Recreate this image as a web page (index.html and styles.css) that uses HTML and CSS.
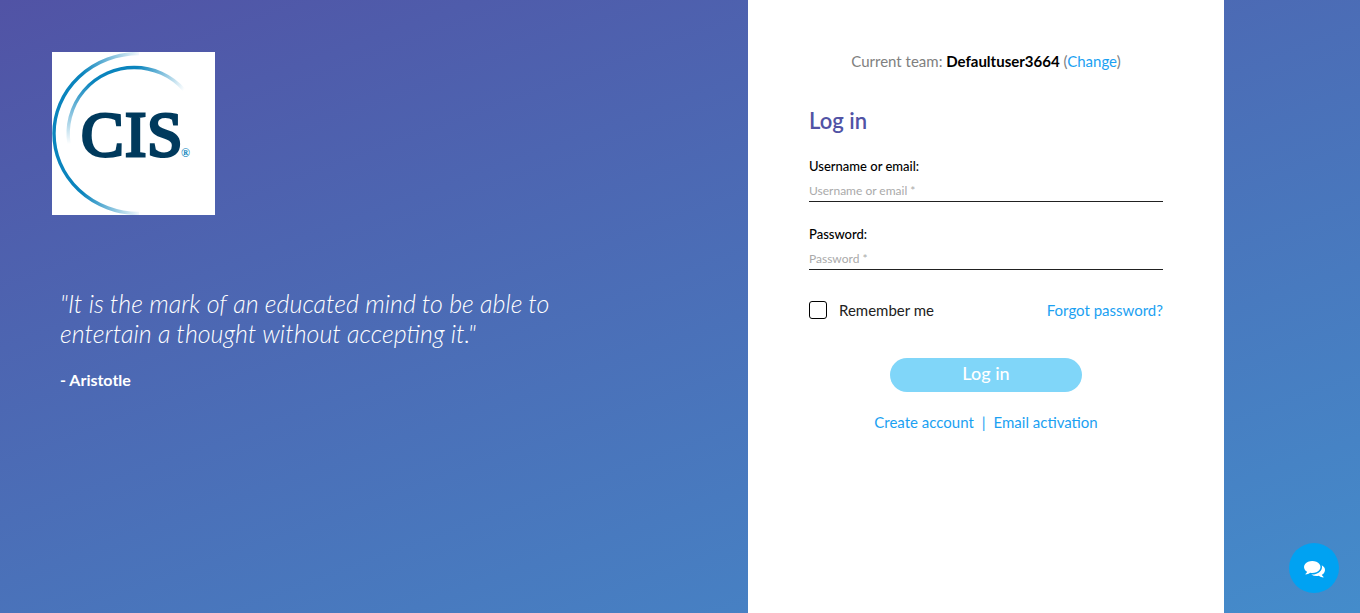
FILE: index.html
```html
<!DOCTYPE html>
<html lang="en">
<head>
<meta charset="utf-8">
<meta name="viewport" content="width=device-width, initial-scale=1">
<title>Log in</title>
<link rel="stylesheet" href="styles.css">
</head>
<body>
<div class="page">
  <section class="intro">
    <svg class="logo" viewBox="0 0 163 163" role="img" aria-label="CIS">
      <defs>
        <linearGradient id="outer" gradientUnits="userSpaceOnUse" x1="30" y1="0" x2="90" y2="0">
          <stop offset="0" stop-color="#0a84bd"/>
          <stop offset="1" stop-color="#0a84bd" stop-opacity="0"/>
        </linearGradient>
        <linearGradient id="innerTop" gradientUnits="userSpaceOnUse" x1="85" y1="16" x2="132" y2="38">
          <stop offset="0" stop-color="#0a84bd"/>
          <stop offset="1" stop-color="#0a84bd" stop-opacity="0"/>
        </linearGradient>
        <linearGradient id="innerLeft" gradientUnits="userSpaceOnUse" x1="0" y1="30" x2="0" y2="92">
          <stop offset="0" stop-color="#0a84bd"/>
          <stop offset="1" stop-color="#0a84bd" stop-opacity="0"/>
        </linearGradient>
      </defs>
      <rect width="163" height="163" fill="#fff"/>
      <g fill="none" stroke-width="3.4">
        <path d="M87 1.500A85 80 0 0 0 87 161.500" stroke="url(#outer)"/>
        <path d="M82 15.500A66 66 0 0 1 132 38" stroke="url(#innerTop)"/>
        <path d="M82 15.500A66 66 0 0 0 17 92" stroke="url(#innerLeft)"/>
      </g>
      <text class="logo-name" y="104" x="29 73 95">CIS</text>
      <text class="logo-mark" x="129" y="105">®</text>
    </svg>
    <blockquote class="quote">
      <p class="quote-text">"It is the mark of an educated mind to be able to entertain a thought without accepting it."</p>
      <footer class="quote-author">- Aristotle</footer>
    </blockquote>
  </section>
  <main class="panel">
    <p class="team">Current team: <strong class="team-name">Defaultuser3664</strong> (<a class="link" href="#">Change</a>)</p>
    <form class="form">
      <h1 class="title">Log in</h1>
      <div class="field">
        <label class="label" for="username">Username or email:</label>
        <input class="input" id="username" type="text" placeholder="Username or email *">
      </div>
      <div class="field">
        <label class="label" for="password">Password:</label>
        <input class="input" id="password" type="password" placeholder="Password *">
      </div>
      <div class="options">
        <label class="remember" for="remember"><input class="check" id="remember" type="checkbox">Remember me</label>
        <a class="link" href="#">Forgot password?</a>
      </div>
      <button class="submit" type="submit">Log in</button>
    </form>
    <nav class="links"><a class="link" href="#">Create account</a><span>|</span><a class="link" href="#">Email activation</a></nav>
  </main>
</div>
<button class="chat" type="button" aria-label="Open chat">
  <svg class="chat-icon" viewBox="0 0 1792 1792" aria-hidden="true"><path fill="currentColor" d="M1408 768q0 139-94 257t-256.500 186.500-353.500 68.500q-86 0-176-16-124 88-278 128-36 9-86 16h-3q-11 0-20.500-8t-11.500-21q-1-3-1-6.500t.5-6.500 2-6l2.500-5 3.500-5.500 4-5 4.500-5 4-4.500q5-6 23-25t26-29.500 22.500-29 25-38.500 20.500-44q-124-72-195-177t-71-224q0-139 94-257t256.500-186.500 353.500-68.500 353.500 68.500 256.500 186.500 94 257zm384 256q0 120-71 224.500t-195 176.500q10 24 20.500 44t25 38.500 22.500 29 26 29.500 23 25q1 1 4 4.500t4.500 5 4 5 3.500 5.500l2.500 5 2 6 .5 6.500-1 6.500q-3 14-13 22t-22 7q-50-7-86-16-154-40-278-128-90 16-176 16-271 0-472-132 58 4 88 4 161 0 309-45t264-129q125-92 192-212t67-254q0-77-23-152 129 71 204 178t75 230z"/></svg>
</button>
</body>
</html>
```

FILE: styles.css
```css
* {
  box-sizing: border-box;
}

body {
  margin: 0;
  font-family: Lato, "Liberation Sans", sans-serif;
  font-size: 15px;
  line-height: 20px;
  color: #212121;
}

.page {
  display: grid;
  grid-template-columns: 55% 35%;
  min-height: 100vh;
  background: linear-gradient(160deg, #5153a5, #448ccb);
}

.intro {
  padding: 52px;
}

.logo {
  display: block;
  width: 163px;
}

.logo-name {
  font: 64px "Liberation Serif", serif;
  fill: #003a5d;
  stroke: #003a5d;
  stroke-width: 3px;
}

.logo-mark {
  font: bold 12px "Liberation Serif", serif;
  fill: #0a84bd;
}

.quote {
  max-width: 520px;
  margin: 73px 0 0;
  padding: 0 8px;
  color: #fff;
}

.quote-text {
  margin: 0 0 22px;
  font-size: 25px;
  font-style: italic;
  font-weight: 300;
  line-height: 30px;
}

.quote-author {
  font-size: 16px;
  font-weight: 700;
}

.panel {
  padding: 51px 61px;
  background: #fff;
}

.team {
  margin: 0;
  text-align: center;
  color: #808080;
}

.team-name {
  font-weight: 700;
  color: #000;
}

.link {
  color: #1ba1f2;
  text-decoration: none;
}

.title {
  margin: 36px 0 23px;
  font-size: 22px;
  font-weight: 600;
  line-height: 28px;
  color: #5153a5;
}

.field {
  margin-bottom: 24px;
}

.label {
  display: block;
  font-size: 13px;
  font-weight: 500;
  line-height: 16px;
  color: #000;
}

.input {
  display: block;
  width: 100%;
  height: 28px;
  padding: 6px 0 0;
  border: 0;
  border-bottom: 1px solid #212121;
  border-radius: 0;
  background: none;
  font-family: inherit;
  font-size: 12px;
}

.input::placeholder {
  color: #aaa;
}

.options {
  display: flex;
  justify-content: space-between;
  margin-top: 30px;
}

.remember {
  display: flex;
  align-items: center;
  gap: 12px;
}

.check {
  appearance: none;
  width: 18px;
  height: 18px;
  margin: 0;
  border: 1px solid #000;
  border-radius: 3px;
}

.check:checked {
  background: #1ba1f2;
}

.submit {
  display: block;
  width: 192px;
  height: 34px;
  margin: 38px auto 20px;
  padding: 0 0 4px;
  border: 0;
  border-radius: 17px;
  background: #80d6f9;
  color: #fff;
  font-family: inherit;
  font-size: 18px;
  font-weight: 500;
}

.links {
  display: flex;
  justify-content: center;
  gap: 8px;
  color: #1ba1f2;
}

.chat {
  position: fixed;
  right: 21px;
  bottom: 20px;
  display: grid;
  place-items: center;
  width: 50px;
  height: 50px;
  padding: 0;
  border: 0;
  border-radius: 50%;
  background: #00a2f2;
  color: #fff;
}

.chat-icon {
  width: 21px;
}
```
